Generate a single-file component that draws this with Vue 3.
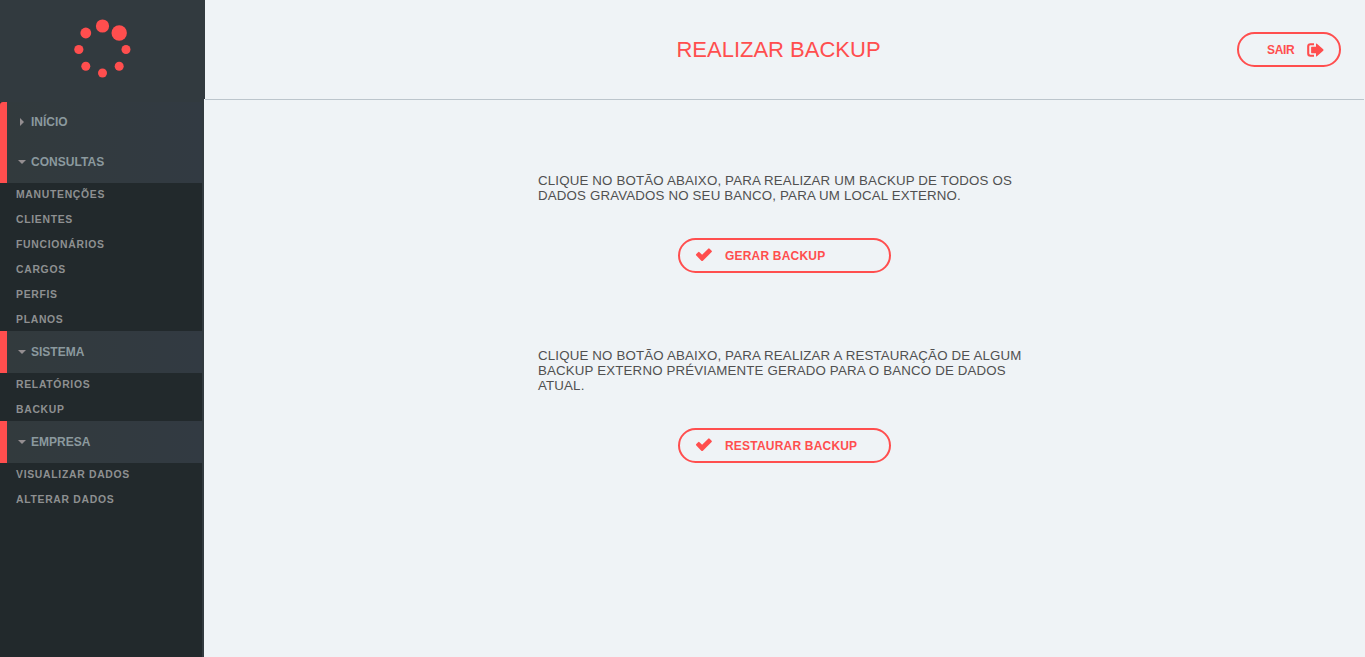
<script setup>
const dots = [
  { x: 42.5, y: 16, r: 6.6 },
  { x: 59.2, y: 23, r: 7.7 },
  { x: 66, y: 39.5, r: 4.5 },
  { x: 59.2, y: 56.3, r: 4.5 },
  { x: 42.5, y: 63, r: 4.5 },
  { x: 25.8, y: 56.3, r: 4.5 },
  { x: 18.8, y: 39.5, r: 4.6 },
  { x: 25.8, y: 23, r: 5.4 },
]
const menu = [
  { title: 'INÍCIO', cls: 'inicio', open: false, items: [] },
  {
    title: 'CONSULTAS',
    cls: 'consultas',
    open: true,
    items: ['MANUTENÇÕES', 'CLIENTES', 'FUNCIONÁRIOS', 'CARGOS', 'PERFIS', 'PLANOS'],
  },
  { title: 'SISTEMA', cls: 'sistema', open: true, items: ['RELATÓRIOS', 'BACKUP'] },
  { title: 'EMPRESA', cls: 'empresa', open: true, items: ['VISUALIZAR DADOS', 'ALTERAR DADOS'] },
]
const actions = [
  {
    lines: ['CLIQUE NO BOTÃO ABAIXO, PARA REALIZAR UM BACKUP DE TODOS OS', 'DADOS GRAVADOS NO SEU BANCO, PARA UM LOCAL EXTERNO.'],
    button: 'GERAR BACKUP',
  },
  {
    lines: ['CLIQUE NO BOTÃO ABAIXO, PARA REALIZAR A RESTAURAÇÃO DE ALGUM', 'BACKUP EXTERNO PRÉVIAMENTE GERADO PARA O BANCO DE DADOS', 'ATUAL.'],
    button: 'RESTAURAR BACKUP',
  },
]
</script>

<template>
  <div class="page">
    <aside class="side">
      <div class="brand">
        <svg width="85" height="80" viewBox="0 0 85 80">
          <circle v-for="(d, i) in dots" :key="i" :cx="d.x" :cy="d.y" :r="d.r" fill="#ff4e4e" />
        </svg>
      </div>
      <nav class="nav">
        <section v-for="g in menu" :key="g.title">
          <div class="group" :class="g.cls">
            <span class="arrow" :class="{ down: g.open }"></span>
            <span class="label">{{ g.title }}</span>
          </div>
          <ul v-if="g.items.length" class="items">
            <li v-for="t in g.items" :key="t">{{ t }}</li>
          </ul>
        </section>
      </nav>
    </aside>
    <div class="main">
      <header class="top">
        <h1>REALIZAR BACKUP</h1>
        <button class="pill exit">
          <span>SAIR</span>
          <svg width="17" height="14" viewBox="0 0 17 14">
            <path d="M7 1.2H3.4Q1.2 1.2 1.2 3.4V10.6Q1.2 12.8 3.4 12.8H7" fill="none" stroke="#ff4e4e" stroke-width="2.1" />
            <path d="M4.1 4.4Q4.1 3.8 4.7 3.8H9V1.1Q9 0 9.9 .8L16.2 6.2Q16.9 7 16.2 7.8L9.9 13.2Q9 14 9 12.9V10.2H4.7Q4.1 10.2 4.1 9.6Z" fill="#ff4e4e" />
          </svg>
        </button>
      </header>
      <main class="content">
        <section v-for="a in actions" :key="a.button" class="action">
          <p><span v-for="l in a.lines" :key="l">{{ l }}</span></p>
          <button class="pill run">
            <svg width="18" height="14" viewBox="0 0 18 14">
              <path d="M1.3 6L3.1 4.2Q3.8 3.5 4.5 4.2L7.1 6.8L13.2 .7Q13.9 0 14.6 .7L16.6 2.7Q17.3 3.4 16.6 4.1L7.9 12.7Q7.1 13.4 6.3 12.7L1.3 7.6Q.5 6.8 1.3 6Z" fill="#ff4e4e" />
            </svg>
            <span>{{ a.button }}</span>
          </button>
        </section>
      </main>
    </div>
  </div>
</template>

<style>
html,
body {
  margin: 0;
  overflow: hidden;
}
</style>

<style scoped>
.page {
  display: flex;
  height: 657px;
  background: #eff3f6;
  font-family: 'Liberation Sans', Arial, sans-serif;
}
.side {
  display: flex;
  flex-direction: column;
  width: 204px;
  flex: none;
}
.brand {
  width: 205px;
  height: 99px;
  box-sizing: border-box;
  padding: 10px 0 0 60px;
  background: #323a3f;
}
.nav {
  flex: 1;
  box-sizing: border-box;
  border-right: 2px solid #323a3f;
  border-top: 3px solid #323a3f;
  background: #22292c;
}
.group {
  display: flex;
  align-items: center;
  box-sizing: border-box;
  height: 42px;
  padding-left: 11px;
  border-left: 7px solid #ff4e4e;
  background: linear-gradient(90deg, #323a3d, #323a42);
  color: #8b999e;
  font-size: 12px;
  font-weight: bold;
}
.inicio {
  height: 39px;
  border-top-left-radius: 3px;
}
.arrow {
  width: 7px;
  margin-right: 6px;
  display: flex;
  justify-content: center;
}
.arrow::before {
  content: '';
  border-style: solid;
  border-width: 4px 0 4px 4px;
  border-color: transparent transparent transparent #948e91;
}
.arrow.down::before {
  border-width: 4px 4px 0;
  border-color: #948e91 transparent transparent;
}
.consultas .label {
  letter-spacing: 0.05px;
}
.items {
  list-style: none;
  margin: 0;
  padding: 0 0 0 16px;
  height: 148px;
}
.sistema + .items {
  height: 48px;
}
.items li {
  height: 25px;
  line-height: 24px;
  font-size: 10.4px;
  font-weight: bold;
  letter-spacing: 0.7px;
  color: #8e9091;
}
.main {
  flex: 1;
  display: flex;
  flex-direction: column;
}
.top {
  display: grid;
  grid-template-columns: 1fr auto 1fr;
  align-items: center;
  box-sizing: border-box;
  height: 100px;
  margin: 0 1px;
  padding: 0 23px 0 11px;
  border-bottom: 1px solid #bcc5cc;
}
h1 {
  grid-column: 2;
  margin: 0;
  font-size: 22px;
  font-weight: normal;
  line-height: 26px;
  color: #ff4e4e;
}
.pill {
  display: flex;
  align-items: center;
  box-sizing: border-box;
  height: 35px;
  padding: 0;
  border: 2px solid #ff4e4e;
  border-radius: 18px;
  background: transparent;
  color: #ff4e4e;
  font: bold 12px 'Liberation Sans', Arial, sans-serif;
}
.exit {
  justify-self: end;
  width: 104px;
  padding-left: 28px;
  gap: 13px;
  letter-spacing: -0.3px;
}
.content {
  width: 494px;
  margin: 73px 0 0 334px;
}
.action {
  margin-bottom: 75px;
}
.action p {
  margin: 0 0 35px;
  color: #505050;
  font-size: 13.3px;
  line-height: 15px;
  letter-spacing: 0.16px;
}
.action p span {
  display: block;
  white-space: nowrap;
}
.run {
  width: 213px;
  margin-left: 140px;
  padding-left: 15px;
  gap: 12px;
  letter-spacing: 0.2px;
}
.run svg {
  margin-top: -1px;
}
</style>
